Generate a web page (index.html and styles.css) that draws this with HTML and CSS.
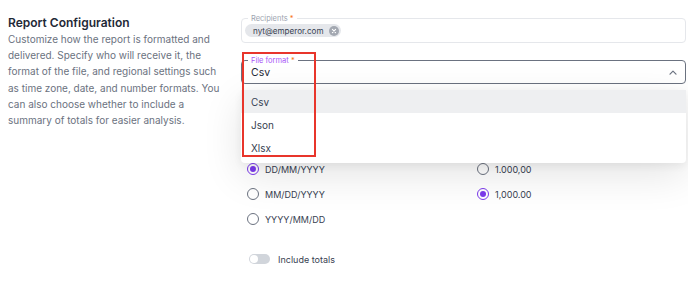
FILE: index.html
```html
<!DOCTYPE html>
<html lang="en">
<head>
    <meta charset="UTF-8">
    <meta name="viewport" content="width=device-width, initial-scale=1.0">
    <title>Report Configuration</title>
    <link rel="stylesheet" href="styles.css">
</head>
<body>
    <div class="page">
        <!-- Section description -->
        <section class="intro">
            <h2>Report Configuration</h2>
            <p>Customize how the report is formatted and delivered. Specify who will receive it, the format of the file, and regional settings such as time zone, date, and number formats. You can also choose whether to include a summary of totals for easier analysis.</p>
        </section>

        <form class="settings">
            <!-- Recipients -->
            <div class="field field-recipients">
                <span class="field-label">Recipients <span class="req">*</span></span>
                <span class="chip">nyt@emperor.com
                    <span class="chip-x">
                        <svg width="10" height="10" viewBox="0 0 10 10"><circle cx="5" cy="5" r="5" fill="#a3a8b1"/><path d="M3.4 3.4l3.2 3.2M6.6 3.4l-3.2 3.2" stroke="#fff" stroke-width="1.1" stroke-linecap="round"/></svg>
                    </span>
                </span>
            </div>

            <!-- File format select (open) -->
            <div class="select-wrap">
                <div class="field field-select">
                    <span class="field-label field-label-active">File format <span class="req">*</span></span>
                    <span class="select-value">Csv</span>
                    <svg class="chevron" width="8" height="5" viewBox="0 0 8 5"><path d="M1 4.2L4 1.2l3 3" fill="none" stroke="#6b7280" stroke-width="1.2" stroke-linecap="round" stroke-linejoin="round"/></svg>
                </div>
                <ul class="menu">
                    <li class="menu-item selected">Csv</li>
                    <li class="menu-item">Json</li>
                    <li class="menu-item">Xlsx</li>
                </ul>
                <div class="annotation"></div>
            </div>

            <!-- Date / number formats -->
            <div class="radio-grid">
                <label class="radio"><span class="radio-dot checked"></span>DD/MM/YYYY</label>
                <label class="radio"><span class="radio-dot"></span>1.000,00</label>
                <label class="radio"><span class="radio-dot"></span>MM/DD/YYYY</label>
                <label class="radio"><span class="radio-dot checked"></span>1,000.00</label>
                <label class="radio"><span class="radio-dot"></span>YYYY/MM/DD</label>
            </div>

            <!-- Totals -->
            <label class="toggle">
                <span class="toggle-track"><span class="toggle-knob"></span></span>
                Include totals
            </label>
        </form>
    </div>
</body>
</html>
```

FILE: styles.css
```css
body {
    margin: 0;
    background-color: #ffffff;
    font-family: Inter, "Noto Sans", sans-serif;
    color: #1f2937;
}

.page {
    display: grid;
    grid-template-columns: 225px 1fr;
    gap: 8px;
    padding: 0 2px 0 8px;
}

/* Left description column */
.intro {
    padding-top: 14px;
}

.intro h2 {
    margin: 0;
    font-size: 12px;
    line-height: 17px;
    font-weight: 600;
    color: #1f2937;
}

.intro p {
    margin: 0;
    max-width: 216px;
    font-size: 10px;
    line-height: 16.2px;
    color: #6b7280;
}

/* Right form column */
.settings {
    padding-top: 18px;
}

.field {
    position: relative;
    box-sizing: border-box;
    border: 1px solid #e5e7eb;
    border-radius: 4px;
    display: flex;
    align-items: center;
}

.field-label {
    position: absolute;
    top: -5px;
    left: 6px;
    padding: 0 3px;
    background-color: #ffffff;
    font-size: 7.5px;
    line-height: 9px;
    color: #9ca3af;
}

.field-label-active {
    color: #a855f7;
}

.req {
    color: #f97316;
}

.field-recipients {
    height: 25px;
    padding: 0 3px;
    margin-bottom: 17px;
}

.chip {
    display: inline-flex;
    align-items: center;
    gap: 6px;
    height: 13px;
    padding: 0 2px 0 8px;
    border-radius: 7px;
    background-color: #e5e7eb;
    font-size: 8.1px;
    color: #374151;
}

.chip-x {
    display: flex;
}

.select-wrap {
    position: relative;
}

.field-select {
    height: 24px;
    padding: 0 9px;
    justify-content: space-between;
    border-color: #6b7280;
}

.select-value {
    font-size: 10.5px;
    color: #1f2937;
}

.chevron {
    margin-right: -1px;
}

/* Open dropdown */
.menu {
    position: absolute;
    top: 30px;
    left: 0;
    right: 0;
    z-index: 2;
    margin: 0;
    padding: 0 0 4px;
    list-style: none;
    background-color: #ffffff;
    border-radius: 4px;
    box-shadow: 0 12px 40px rgba(0, 0, 0, 0.11), 0 3px 8px rgba(0, 0, 0, 0.06);
}

.menu-item {
    height: 23px;
    display: flex;
    align-items: center;
    padding-left: 10px;
    font-size: 10px;
    color: #374151;
}

.menu-item.selected {
    background-color: #eeeff1;
}

/* Red highlight box over the screenshot */
.annotation {
    position: absolute;
    top: -8px;
    left: 1px;
    width: 74px;
    height: 105px;
    box-sizing: border-box;
    border: 2px solid #e8352b;
    z-index: 3;
}

.radio-grid {
    display: grid;
    grid-template-columns: 230px 1fr;
    grid-auto-rows: 25px;
    margin-top: 72.5px;
    padding-left: 6px;
}

.radio {
    display: flex;
    align-items: center;
    gap: 6px;
    font-size: 9px;
    color: #374151;
}

.radio-dot {
    box-sizing: border-box;
    width: 12px;
    height: 12px;
    border-radius: 50%;
    border: 1px solid #6b7280;
    display: flex;
    align-items: center;
    justify-content: center;
}

.radio-dot.checked {
    border-color: #7c3aed;
}

.radio-dot.checked::after {
    content: "";
    width: 6px;
    height: 6px;
    border-radius: 50%;
    background-color: #7c3aed;
}

.toggle {
    display: flex;
    align-items: center;
    gap: 8px;
    height: 20px;
    margin-top: 17.5px;
    padding-left: 8px;
    font-size: 9px;
    color: #374151;
}

.toggle-track {
    width: 21px;
    height: 10px;
    border-radius: 5px;
    background-color: #d1d5db;
    display: flex;
    align-items: center;
    padding-left: 1px;
    box-sizing: border-box;
}

.toggle-knob {
    width: 8px;
    height: 8px;
    border-radius: 50%;
    background-color: #ffffff;
}
```
